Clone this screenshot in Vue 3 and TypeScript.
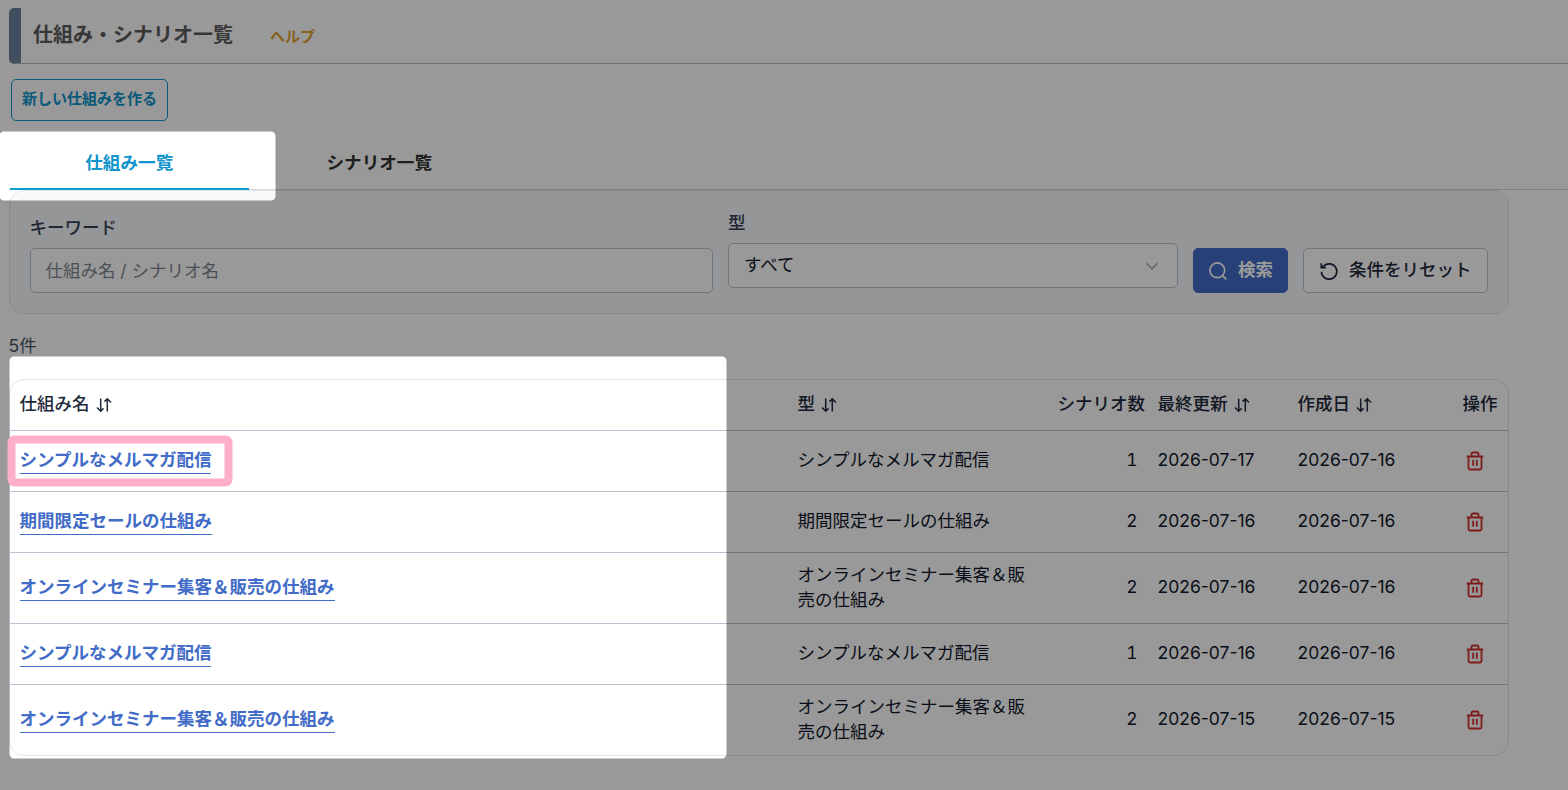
<script setup lang="ts">
interface Row {
  name: string
  type: string
  count: number
  updated: string
  created: string
}

const simple = 'シンプルなメルマガ配信'
const sale = '期間限定セールの仕組み'
const seminar = 'オンラインセミナー集客＆販売の仕組み'

const rows: Row[] = [
  { name: simple, type: simple, count: 1, updated: '2026-07-17', created: '2026-07-16' },
  { name: sale, type: sale, count: 2, updated: '2026-07-16', created: '2026-07-16' },
  { name: seminar, type: seminar, count: 2, updated: '2026-07-16', created: '2026-07-16' },
  { name: simple, type: simple, count: 1, updated: '2026-07-16', created: '2026-07-16' },
  { name: seminar, type: seminar, count: 2, updated: '2026-07-15', created: '2026-07-15' },
]

const headers = [
  { label: '仕組み名', sortable: true },
  { label: '型', sortable: true },
  { label: 'シナリオ数', sortable: false },
  { label: '最終更新', sortable: true },
  { label: '作成日', sortable: true },
  { label: '操作', sortable: false },
]

// Rounded rectangle as a path, used for the holes of the dimming layer
function hole(x: number, y: number, w: number, h: number, r: number): string {
  return `M${x + r} ${y}h${w - 2 * r}a${r} ${r} 0 0 1 ${r} ${r}v${h - 2 * r}a${r} ${r} 0 0 1 ${-r} ${r}h${-(w - 2 * r)}a${r} ${r} 0 0 1 ${-r} ${-r}v${-(h - 2 * r)}a${r} ${r} 0 0 1 ${r} ${-r}z`
}
const dim = `M0 0H1568V790H0Z${hole(-0.5, 131.5, 276, 69, 4.5)}${hole(9.5, 356.5, 717, 402, 4.5)}`
</script>

<template>
  <div class="page">
    <header class="head">
      <h1>仕組み・シナリオ一覧</h1>
      <a class="help">ヘルプ</a>
    </header>
    <button class="create">新しい仕組みを作る</button>
    <nav class="tabs">
      <a class="tab active">仕組み一覧</a>
      <a class="tab">シナリオ一覧</a>
    </nav>

    <section class="filter">
      <div class="field keyword">
        <label>キーワード</label>
        <div class="control placeholder">仕組み名 / シナリオ名</div>
      </div>
      <div class="field type">
        <label>型</label>
        <div class="control select">
          <span>すべて</span>
          <svg width="14" height="14" viewBox="0 0 14 14"><path d="M1.500 4.200 7 9.800l5.500-5.600" /></svg>
        </div>
      </div>
      <button class="btn primary">
        <svg width="20" height="20" viewBox="0 0 20 20"><circle cx="9.300" cy="9.300" r="7.400" /><path d="m14.600 14.600 3.700 3.700" /></svg>
        <span>検索</span>
      </button>
      <button class="btn">
        <svg width="20" height="20" viewBox="0 0 20 20"><path d="M2.400 10.800a7.700 7.700 0 1 0 2.400-5.900L2.600 6.700M2.300 2.300v4.400h4.600" /></svg>
        <span>条件をリセット</span>
      </button>
    </section>

    <p class="total">5件</p>

    <section class="table">
      <div class="row thead">
        <div v-for="h in headers" :key="h.label" class="cell">
          <span>{{ h.label }}</span>
          <svg v-if="h.sortable" class="sort" width="16" height="16" viewBox="0 0 16 16">
            <path d="M4.700 1.500v12.700M1 10.500l3.700 3.700L7.500 11.400M11.300 14.500V1.800M8.500 4.600l2.800-2.800L15 5.500" />
          </svg>
        </div>
      </div>
      <div v-for="(r, i) in rows" :key="i" class="row">
        <div class="cell"><a class="name">{{ r.name }}</a></div>
        <div class="cell kind">{{ r.type }}</div>
        <div class="cell">{{ r.count }}</div>
        <div class="cell">{{ r.updated }}</div>
        <div class="cell">{{ r.created }}</div>
        <div class="cell">
          <svg class="trash" width="18" height="20" viewBox="0 0 18 20">
            <path d="M.8 5.500h16.400M5.500 5.500V3Q5.500 1.500 7 1.500h4Q12.500 1.500 12.500 3v2.500M2.500 5.500v11.500q0 1.500 1.500 1.500h10q1.500 0 1.500-1.500V5.500M7.200 8.700v6M10.800 8.700v6" />
          </svg>
        </div>
      </div>
    </section>

    <svg class="spotlight" width="1568" height="790" viewBox="0 0 1568 790">
      <path :d="dim" fill="#000" fill-opacity=".4" fill-rule="evenodd" />
      <rect x="11.500" y="439.500" width="217" height="43" rx="3" fill="none" stroke="#ffaec8" stroke-width="8" />
    </svg>
  </div>
</template>

<style>
body {
  margin: 0;
  background: #fff;
}
</style>

<style scoped>
.page {
  position: relative;
  box-sizing: border-box;
  width: 1568px;
  height: 790px;
  padding: 8px 0 0 9px;
  overflow: hidden;
  background: #fff;
  color: #0f172a;
  font-family: Inter, "Noto Sans CJK JP", sans-serif;
  font-size: 17.5px;
  line-height: 25px;
}
button {
  font: inherit;
  margin: 0;
}
.head {
  box-sizing: border-box;
  display: flex;
  align-items: center;
  height: 56px;
  padding: 0 0 3px 12px;
  border-left: 12px solid #6b829b;
  border-bottom: 1px solid #bbb;
  border-radius: 5px 0 0 5px;
  font-family: "Noto Sans CJK JP", sans-serif;
}
h1 {
  margin: 0;
  width: 237px;
  color: #5c5c5c;
  font-size: 20px;
  line-height: 30px;
}
.help {
  color: #dfa22f;
  font-size: 15px;
  font-weight: 700;
  padding-top: 2px;
}
.create {
  display: block;
  box-sizing: border-box;
  width: 157px;
  height: 42px;
  margin: 15px 0 0 2px;
  padding: 0 0 4px;
  border: 1px solid #0f94cb;
  border-radius: 5px;
  background: #fff;
  color: #0f94cb;
  font: 700 15px/22px "Noto Sans CJK JP", sans-serif;
  white-space: nowrap;
}
.tabs {
  box-sizing: border-box;
  display: flex;
  gap: 10.5px;
  height: 58px;
  margin-top: 11px;
  padding-left: 0.5px;
  border-bottom: 1px solid #d8d8d8;
  font: 700 17.6px/26px "Noto Sans CJK JP", sans-serif;
}
.tab {
  box-sizing: border-box;
  width: 239.5px;
  height: 58px;
  padding-top: 17px;
  text-align: center;
  color: #333;
}
.tab.active {
  color: #0f94cb;
  border-bottom: 2px solid #0f9bd0;
}
.filter {
  box-sizing: border-box;
  display: flex;
  align-items: flex-end;
  gap: 15px;
  width: 1500px;
  height: 124px;
  padding: 0 20px 20px;
  border: 1px solid #e2e8f0;
  border-radius: 15px;
  background: #f8fafc;
}
.field {
  display: flex;
  flex-direction: column;
  gap: 8px;
}
.keyword {
  width: 683px;
}
.type {
  width: 450px;
  padding-bottom: 5px;
}
label {
  font-weight: 500;
  color: #334155;
}
.keyword label {
  margin-left: -0.5px;
}
.control,
.btn {
  box-sizing: border-box;
  height: 45px;
  border: 1px solid #bac5d3;
  border-radius: 5px;
  background: #fff;
}
.control {
  display: flex;
  align-items: center;
  justify-content: space-between;
  padding: 0 18px 2px 15px;
}
.control.placeholder {
  padding: 0 0 0 14.4px;
  color: #7f8691;
}
svg {
  display: block;
  flex: none;
  fill: none;
  stroke: currentColor;
  stroke-width: 1.5;
}
.select svg {
  margin-top: 2px;
  color: #a0a9b7;
}
.btn {
  display: flex;
  align-items: center;
  gap: 10px;
  width: 185px;
  padding: 0 0 2px 15px;
  color: #1e293b;
  font-weight: 500;
  white-space: nowrap;
}
.btn svg {
  margin-top: 3px;
  stroke-width: 1.7;
}
.primary {
  width: 95px;
  padding-left: 14px;
  border-color: #426cc7;
  background: #426cc7;
  color: #fff;
  font-weight: 700;
}
.total {
  margin: 19px 0 21px -0.5px;
  color: #475569;
}
.table {
  box-sizing: border-box;
  width: 1500px;
  height: 377px;
  border: 1px solid #e2e8f0;
  border-radius: 15px;
}
.row {
  box-sizing: border-box;
  display: grid;
  grid-template-columns: 778px 260px 100px 140px 160px 60px;
  align-items: center;
  height: 61px;
  padding-bottom: 3px;
  border-bottom: 1px solid #bac5d3;
}
.row:nth-child(4) {
  height: 71px;
}
.row:last-child {
  height: 70px;
  border-bottom: 0;
  padding-bottom: 2px;
}
.thead {
  height: 51px;
  color: #1e293b;
  font-weight: 500;
}
.cell {
  display: flex;
  align-items: center;
  padding: 0 10.5px 0 9.5px;
  white-space: nowrap;
}
.kind {
  white-space: normal;
  word-break: break-all;
}
.cell:nth-child(3) {
  justify-content: flex-end;
  padding-right: 10.5px;
  font-variant-numeric: tabular-nums;
}
.thead .cell:nth-child(3) {
  justify-content: flex-start;
}
.cell:nth-child(6) {
  padding-left: 14.5px;
}
.row:last-child .cell:nth-child(n + 3) {
  margin-top: -1px;
}
.sort {
  margin: 3px 0 0 6px;
}
.trash {
  margin: 3px 0 0 3.5px;
  color: #d32f2f;
  stroke-width: 1.8;
}
.name {
  color: #426cc7;
  font-weight: 700;
  border-bottom: 1px solid currentColor;
  line-height: 27px;
}
.spotlight {
  position: absolute;
  top: 0;
  left: 0;
  stroke: none;
}
</style>
